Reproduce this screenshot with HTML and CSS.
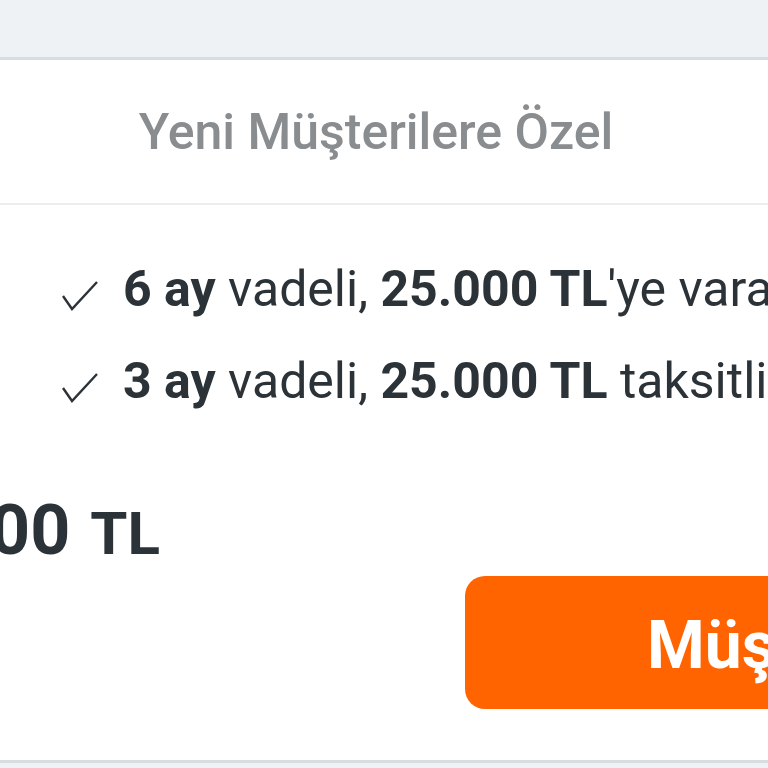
FILE: index.html
```html
<!DOCTYPE html>
<html lang="tr">
<head>
    <meta charset="UTF-8"/>
    <meta name="viewport" content="width=device-width, initial-scale=1.0"/>
    <title>Yeni Müşterilere Özel</title>
    <link rel="stylesheet" href="styles.css">
</head>
<body>
<div class="topBar"></div>
<div class="card">
    <div class="cardHead">Yeni Müşterilere Özel</div>
    <ul class="perks">
        <li>
            <svg class="tick" viewBox="0 0 36 30"><path d="M1 15 L10 28 L35 1"/></svg>
            <span><b>6 ay</b> vadeli, <b>25.000 TL</b>'ye varan faizsiz kredi</span>
        </li>
        <li>
            <svg class="tick" viewBox="0 0 36 30"><path d="M1 15 L10 28 L35 1"/></svg>
            <span><b>3 ay</b> vadeli, <b>25.000 TL</b> taksitli nakit avans</span>
        </li>
    </ul>
    <div class="priceRow">
        <div class="price"><span class="amount">25.000</span><span class="unit">TL</span></div>
    </div>
    <div class="actionRow">
        <a href="javascript:;" class="applyBtn">Müşteri Ol</a>
    </div>
</div>
<div class="bottomBar"></div>
</body>
</html>
```

FILE: styles.css
```css
* {
    margin: 0;
    padding: 0;
    box-sizing: border-box;
}

body {
    background: #eef2f5;
    font-family: Roboto, "Liberation Sans", Arial, sans-serif;
    color: #2c3338;
    overflow: hidden;
}

.topBar {
    height: 57px;
}

.card {
    background: #fff;
    border-top: 3px solid #d6dce0;
    border-bottom: 3px solid #d6dce0;
    overflow: hidden;
    height: 706px;
}

.cardHead {
    height: 145px;
    display: flex;
    align-items: center;
    justify-content: center;
    padding-right: 16px;
    font-size: 50px;
    font-weight: 500;
    color: #898d90;
    border-bottom: 2px solid #ececec;
}

.perks {
    list-style: none;
    padding: 38px 0 0 62px;
}

.perks li {
    display: flex;
    align-items: center;
    height: 92px;
    white-space: nowrap;
    font-size: 50px;
}

.perks li b {
    font-weight: 700;
}

.tick {
    width: 36px;
    height: 30px;
    margin: 14px 25px 0 0;
    flex: none;
}

.tick path {
    fill: none;
    stroke: #2c3338;
    stroke-width: 2.4;
}

.priceRow {
    width: 160px;
    display: flex;
    justify-content: flex-end;
    margin-top: 68px;
    white-space: nowrap;
}

.price {
    font-weight: 700;
    line-height: 1;
}

.price .amount {
    font-size: 70px;
}

.price .unit {
    font-size: 60px;
    margin-left: 20px;
}

.actionRow {
    display: flex;
    padding: 11px 0 0 465px;
}

.applyBtn {
    flex: none;
    width: 560px;
    height: 133px;
    background: #ff6400;
    border-radius: 20px;
    color: #fff;
    text-decoration: none;
    font-size: 66px;
    font-weight: 700;
    display: flex;
    align-items: center;
    padding: 6px 0 0 182px;
}
```
